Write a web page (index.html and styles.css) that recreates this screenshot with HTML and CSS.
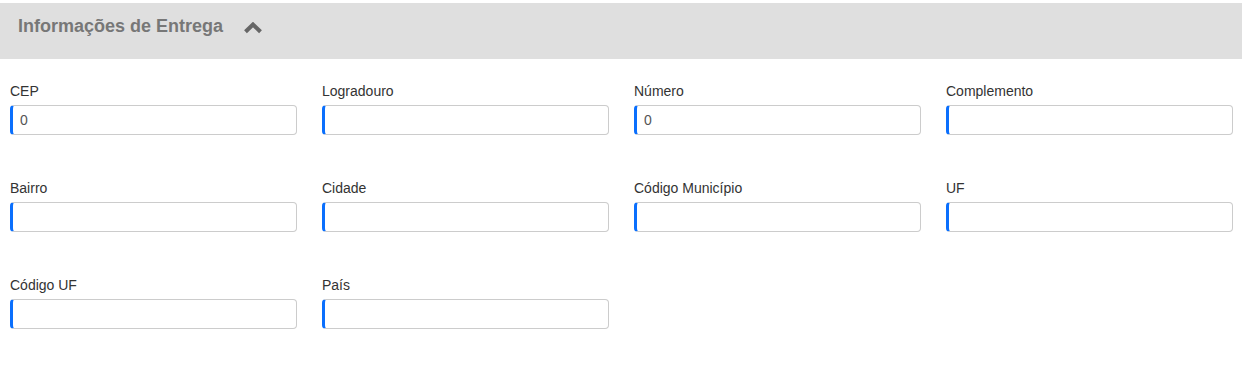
FILE: index.html
```html
<!DOCTYPE html>
<html lang="pt-BR">
<head>
<meta charset="utf-8">
<title>Informações de Entrega</title>
<link rel="stylesheet" href="styles.css">
</head>
<body>
<section class="panel">
  <header class="panel-header">
    <h2 class="panel-title">Informações de Entrega</h2>
    <svg class="chevron" width="20" height="12" viewBox="0 0 20 12" aria-hidden="true">
      <polyline points="2.5,9.8 10,2.5 17.5,9.8" fill="none" stroke="#666" stroke-width="4" stroke-linecap="butt" stroke-linejoin="miter"/>
    </svg>
  </header>
  <div class="form-grid">
    <div class="field"><label>CEP</label><input class="input" type="text" value="0"></div>
    <div class="field"><label>Logradouro</label><input class="input" type="text" value=""></div>
    <div class="field"><label>Número</label><input class="input" type="text" value="0"></div>
    <div class="field"><label>Complemento</label><input class="input" type="text" value=""></div>
    <div class="field"><label>Bairro</label><input class="input" type="text" value=""></div>
    <div class="field"><label>Cidade</label><input class="input" type="text" value=""></div>
    <div class="field"><label>Código Município</label><input class="input" type="text" value=""></div>
    <div class="field"><label>UF</label><input class="input" type="text" value=""></div>
    <div class="field"><label>Código UF</label><input class="input" type="text" value=""></div>
    <div class="field"><label>País</label><input class="input" type="text" value=""></div>
  </div>
</section>
</body>
</html>
```
FILE: styles.css
```css
html, body {
  margin: 0;
  padding: 0;
  background: #fff;
  font-family: "Liberation Sans", Arial, sans-serif;
}

.panel {
  padding-top: 3px;
}

.panel-header {
  width: 1242px;
  height: 56px;
  box-sizing: border-box;
  background: #dfdfdf;
  display: flex;
  align-items: flex-start;
  padding: 12px 0 0 18px;
}

.panel-title {
  margin: 0;
  font-size: 18px;
  line-height: 22px;
  font-weight: bold;
  color: #777;
}

.chevron {
  margin-left: 20px;
  margin-top: 7px;
  display: block;
}

.form-grid {
  display: grid;
  grid-template-columns: repeat(4, 287px);
  column-gap: 25px;
  row-gap: 43px;
  padding: 22px 0 0 10px;
}

.field {
  display: flex;
  flex-direction: column;
}

.field label {
  font-size: 14px;
  line-height: 20px;
  color: #333;
  margin-bottom: 4px;
}

.input {
  box-sizing: border-box;
  width: 287px;
  height: 30px;
  margin: 0;
  border: 1px solid #ccc;
  border-left: 3px solid #0a6ffd;
  border-radius: 4px;
  padding: 0 0 0 7px;
  font-family: "Liberation Sans", Arial, sans-serif;
  font-size: 14px;
  color: #555;
  background: #fff;
  outline: none;
}
```
